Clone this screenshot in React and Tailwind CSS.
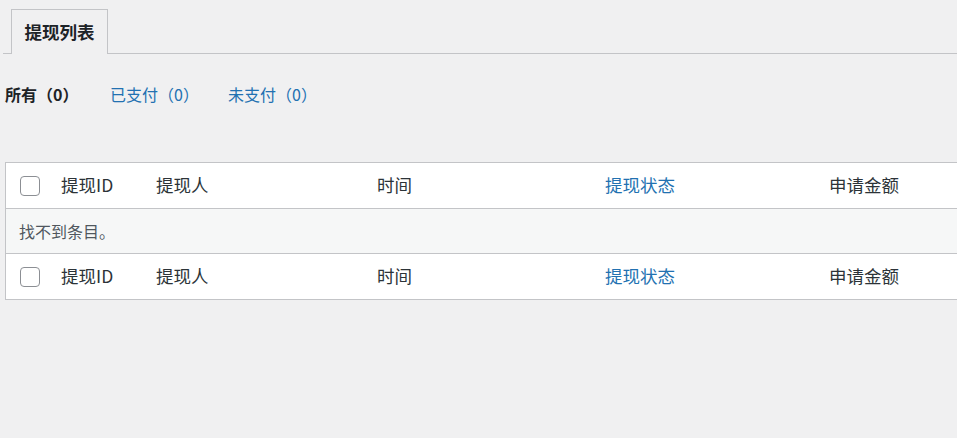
export default function App() {
  const cols = ["提现ID", "提现人", "时间", "提现状态", "申请金额"];

  const HeadRow = () => (
    <div className="grid grid-cols-[45px_95px_221px_228px_224px_1fr] h-[45px] items-center text-[17.5px] text-[#2c3338]">
      <div className="pl-[14px] flex items-center">
        <span className="block w-[20px] h-[20px] rounded-[4px] border border-[#8c8f94] bg-white" />
      </div>
      {cols.map((c) => (
        <div key={c} className={"pl-[10px] whitespace-nowrap " + (c === "提现状态" ? "text-[#2271b1]" : "")}>
          {c}
        </div>
      ))}
    </div>
  );

  return (
    <div className="h-[438px] w-full overflow-hidden bg-[#f0f0f1] font-['Noto_Sans_CJK_SC','Noto_Sans',sans-serif]">
      {/* tabs */}
      <div className="ml-[3px] pt-[9px] border-b border-[#c3c4c7] flex">
        <div className="ml-[8px] -mb-px h-[45px] w-[97px] border border-b-0 border-[#c3c4c7] bg-[#f0f0f1] flex items-center justify-center whitespace-nowrap text-[17.5px] font-bold text-[#1d2327]">
          提现列表
        </div>
      </div>

      {/* filters */}
      <div className="mt-[28px] ml-[5px] flex h-[24px] items-center text-[16px]">
        <span className="w-[105px] font-bold text-[#1d2327]">所有（0）</span>
        <span className="w-[118px] text-[#2271b1]">已支付（0）</span>
        <span className="text-[#2271b1]">未支付（0）</span>
      </div>

      {/* table */}
      <div className="mt-[56px] ml-[5px] w-[1000px] border-l border-t border-b border-[#c3c4c7] bg-white">
        <HeadRow />
        <div className="h-[46px] border-t border-b border-[#c3c4c7] bg-[#f6f7f7] flex items-center pl-[13px] text-[16px] text-[#50575e]">
          找不到条目。
        </div>
        <HeadRow />
      </div>
    </div>
  );
}
